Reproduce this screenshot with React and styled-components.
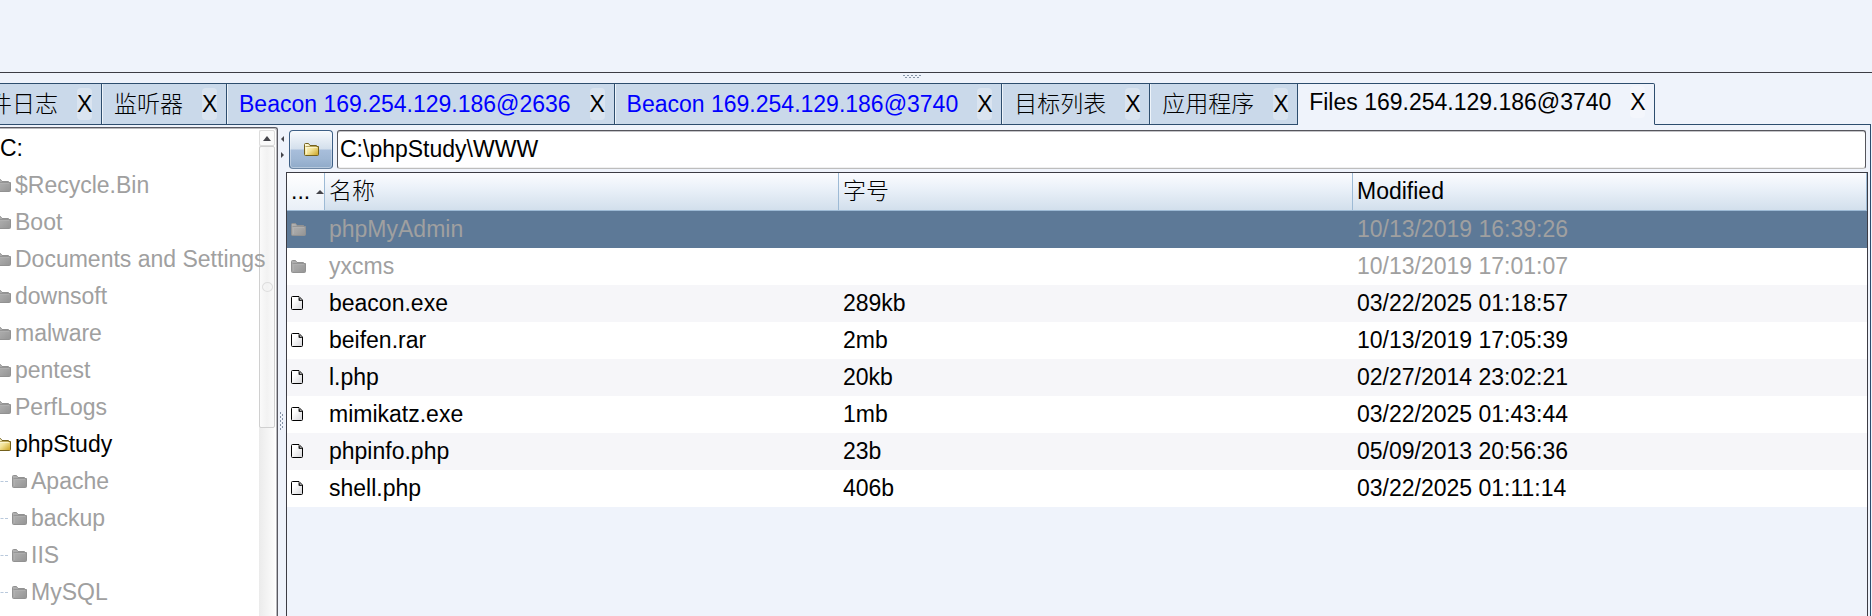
import React, { useState } from "react";
import styled, { createGlobalStyle, css } from "styled-components";

const color = {
  face: "#eff3fb",
  tab: "#cad9ea",
  edge: "#2d4d6e",
  frame: "#3c3c44",
  muted: "#a0a0a0",
  selection: "#5d7997",
  stripe: "#f6f6f9",
  headerLine: "#9dbad5",
};

const GlobalStyle = createGlobalStyle`
  * { box-sizing: border-box; }
  body { margin: 0; background: ${color.face}; }
  body, button, input, table {
    font-family: "Liberation Sans", "Noto Sans CJK SC", sans-serif;
    font-size: 23px;
    font-weight: 300;
    color: #000;
  }
`;

const Window = styled.div`
  display: flex;
  flex-direction: column;
  height: 100vh;
  overflow: hidden;
  background: ${color.face};
`;

const UpperPane = styled.section`
  flex: none;
  height: 73px;
  border-bottom: 1px solid ${color.frame};
`;

const HorizontalSplitter = styled.div`
  flex: none;
  display: flex;
  justify-content: center;
  height: 10px;
  padding: 2px 48px 0 0;
`;

const TabStrip = styled.div`
  flex: none;
  display: flex;
  height: 42px;
  margin-right: 1px;
  white-space: nowrap;

  &::after {
    content: "";
    flex: 1;
    border-bottom: 1px solid ${color.edge};
  }
`;

const Tab = styled.div`
  flex: none;
  display: flex;
  align-items: center;
  gap: 19px;
  padding: 0 9px 0 12px;
  border: solid ${color.edge};
  border-width: 1px 1px 1px 0;
  background: ${color.tab};
  box-shadow: inset 1px 0 #eef4fa;

  &:first-child { margin-left: -23px; }

  ${(p) => p.$active && css`
    padding: 0 9px 4px 11px;
    border-bottom-color: transparent;
    border-top-right-radius: 2px;
    background: ${color.face};
    box-shadow: none;
  `}
`;

const TabLabel = styled.button`
  padding: 0;
  border: 0;
  background: none;
  line-height: 32px;
  color: ${(p) => (p.$alert ? "#0000ff" : "#000")};
`;

const CloseButton = styled.button`
  width: 15px;
  padding: 0;
  border: 0;
  border-radius: 4px;
  background: rgba(255, 255, 255, 0.3);
  line-height: 32px;
`;

const Browser = styled.main`
  flex: 1;
  min-height: 0;
  display: flex;
  margin-right: 1px;
  padding: 2px 2px 0 0;
  border-right: 1px solid ${color.edge};
`;

const TreePane = styled.aside`
  flex: none;
  display: flex;
  width: 278px;
  border: solid #5a5a62;
  border-width: 1px 1px 0 0;
  border-top-right-radius: 3px;
  background: #fff;
  box-shadow: inset -1px 1px #b9b9bd;
  padding: 2px 2px 0 0;
  overflow: hidden;
`;

const Tree = styled.ul`
  flex: 1;
  min-width: 0;
  margin: 0;
  padding: 0;
  list-style: none;
  z-index: 1;
`;

const Branch = styled.ul`
  margin: 0 0 0 ${(p) => p.$indent}px;
  padding: 0;
  list-style: none;
`;

const Node = styled.div`
  display: flex;
  align-items: center;
  gap: 4px;
  height: 37px;
  line-height: 37px;
  white-space: nowrap;
  color: ${(p) => (p.$open ? "#000" : color.muted)};
`;

const Connector = styled.span`
  flex: none;
  width: 12px;
  border-top: 1px dashed #b9c9dc;
`;

const ScrollBar = styled.div`
  flex: none;
  width: 16px;
  display: flex;
  flex-direction: column;
  background: linear-gradient(90deg, #ebebeb, #fcfcfc);
`;

const ScrollButton = styled.button`
  display: grid;
  place-items: center;
  height: 16px;
  padding: 0;
  border: 1px solid #dcdcdc;
  border-radius: 2px;
  background: #fafafa;
`;

const Thumb = styled.div`
  display: grid;
  place-items: center;
  height: 282px;
  border: 1px solid #d0d0d0;
  border-radius: 2px;
  background: linear-gradient(90deg, #fafafa, #f2f2f2 50%, #fafafa);
`;

const Knob = styled.span`
  width: 11px;
  height: 10px;
  border: 1px solid #dedede;
  border-radius: 50%;
`;

const VerticalSplitter = styled.div`
  flex: none;
  width: 8px;
  display: flex;
  flex-direction: column;
  align-items: center;
  padding-top: 8px;
`;

const SplitButton = styled.button`
  display: grid;
  place-items: center;
  width: 8px;
  height: 8px;
  margin-bottom: 8px;
  padding: 0;
  border: 0;
  background: none;
`;

const VerticalGrip = styled.svg`
  margin-top: 245px;
`;

const FilePane = styled.section`
  flex: 1;
  min-width: 0;
  display: flex;
  flex-direction: column;
`;

const PathBar = styled.form`
  display: flex;
  gap: 4px;
  padding: 3px 2px 3px 3px;
`;

const UpButton = styled.button`
  flex: none;
  display: grid;
  place-items: center;
  width: 44px;
  height: 39px;
  padding: 0;
  border: 1px solid #3d5f86;
  border-bottom-color: #6d87a5;
  border-radius: 4px;
  background: linear-gradient(#f7fafd, #d3dfec 49%, #a8bedb 51%, #9fb7d4 75%, #8faac9);
  box-shadow: inset 0 0 0 1px rgba(255, 255, 255, 0.35);
`;

const PathInput = styled.input`
  flex: 1;
  min-width: 0;
  height: 39px;
  padding: 0 2px 1px;
  border: 1px solid #55555c;
  border-bottom-color: #bdbdbd;
  border-radius: 3px;
  background: #fff;
  box-shadow: inset 0 1px #c4c4c8, inset 0 -1px #f0f0f0;
  outline: 0;
`;

const TableFrame = styled.div`
  flex: 1;
  border: solid ${color.frame};
  border-width: 1px 1px 0 1px;
`;

const FileTable = styled.table`
  width: 100%;
  table-layout: fixed;
  border-collapse: separate;
  border-spacing: 0;
  line-height: 37px;
`;

const HeaderCell = styled.th`
  height: 38px;
  padding: 0 4px;
  border: solid ${color.headerLine};
  border-width: 0 1px 1px 0;
  background: linear-gradient(#fbfcff, #e9f0f8 45%, #d2dfec);
  font-weight: 300;
  text-align: left;
  white-space: nowrap;
`;

const IconHeaderCell = styled(HeaderCell)`
  width: 38px;
  padding: 0 0 0 4px;
  background: linear-gradient(#ffffff, #e9eff7);
`;

const SortLabel = styled.span`
  display: flex;
  align-items: center;
  justify-content: space-between;
`;

const FileRow = styled.tr`
  color: ${(p) => (p.$folder ? color.muted : "#000")};
  background: #fff;

  &:nth-child(odd) { background: ${color.stripe}; }

  ${(p) => p.$selected && css`
    &:nth-child(odd) { background: ${color.selection}; }
  `}
`;

const Cell = styled.td`
  height: 37px;
  padding: 0 4px;
  white-space: nowrap;

  svg { display: block; }
`;

const FolderSvg = styled.svg`
  flex: none;
`;

const Folder = ({ tone = "grey" }) => {
  const gold = tone === "gold";
  const id = `folder-${tone}`;
  return (
    <FolderSvg width="15" height="15" viewBox="0 0 15 15" aria-hidden="true">
      <defs>
        <linearGradient id={id} x1="0" y1="0" x2="1" y2="1">
          <stop offset="0" stopColor={gold ? "#fffde6" : "#b2b2b2"} />
          <stop offset="0.5" stopColor={gold ? "#f3e49a" : "#a6a6a6"} />
          <stop offset="1" stopColor={gold ? "#c9a01c" : "#949494"} />
        </linearGradient>
      </defs>
      <path
        d="M.5 12.500V2.500Q.5 1.500 1.500 1.500H4.500L6 3.500H12.500V4.500H14.500V12.500Q14.500 13.500 13.500 13.500H1.500Q.5 13.500 .5 12.500Z"
        fill={`url(#${id})`}
        stroke={gold ? "#73601c" : "#929292"}
      />
      <path d="M2.500 12V5.500H13" fill="none" stroke={gold ? "#fffbe0" : "#b4b4b4"} opacity=".6" />
      <path d="M1.500 4.500H12.500" stroke={gold ? "#a08a3a" : "#8e8e8e"} opacity=".7" />
    </FolderSvg>
  );
};

const Page = () => (
  <svg width="13" height="15" viewBox="0 0 13 15" aria-hidden="true">
    <defs>
      <linearGradient id="page" x1="0" y1="0" x2="1" y2="1">
        <stop offset="0.3" stopColor="#fff" />
        <stop offset="1" stopColor="#d4d4d8" />
      </linearGradient>
    </defs>
    <path d="M1.500 .5H8L11.500 4V12.500Q11.500 13.500 10.500 13.500H1.500Q.5 13.500 .5 12.500V1.500Q.5 .5 1.500 .5Z" fill="url(#page)" stroke="#000" />
    <path d="M7.500 1L11.500 5H8.500Q7.500 5 7.500 4Z" fill="#222" />
    <path d="M9 3L10 4" stroke="#aaa" />
  </svg>
);

const Triangle = ({ points, w, h }) => (
  <svg width={w} height={h} aria-hidden="true">
    <polygon points={points} fill="#44444a" />
  </svg>
);

const tabs = [
  { label: "件日志" },
  { label: "监听器" },
  { label: "Beacon 169.254.129.186@2636", alert: true },
  { label: "Beacon 169.254.129.186@3740", alert: true },
  { label: "目标列表" },
  { label: "应用程序" },
  { label: "Files 169.254.129.186@3740" },
];

const folders = [
  { name: "$Recycle.Bin" },
  { name: "Boot" },
  { name: "Documents and Settings" },
  { name: "downsoft" },
  { name: "malware" },
  { name: "pentest" },
  { name: "PerfLogs" },
  { name: "phpStudy", children: ["Apache", "backup", "IIS", "MySQL"] },
];

const files = [
  { name: "phpMyAdmin", size: "", modified: "10/13/2019 16:39:26", folder: true },
  { name: "yxcms", size: "", modified: "10/13/2019 17:01:07", folder: true },
  { name: "beacon.exe", size: "289kb", modified: "03/22/2025 01:18:57" },
  { name: "beifen.rar", size: "2mb", modified: "10/13/2019 17:05:39" },
  { name: "l.php", size: "20kb", modified: "02/27/2014 23:02:21" },
  { name: "mimikatz.exe", size: "1mb", modified: "03/22/2025 01:43:44" },
  { name: "phpinfo.php", size: "23b", modified: "05/09/2013 20:56:36" },
  { name: "shell.php", size: "406b", modified: "03/22/2025 01:11:14" },
];

export default function App() {
  const [path, setPath] = useState("C:\\phpStudy\\WWW");

  return (
    <Window>
      <GlobalStyle />
      <UpperPane />
      <HorizontalSplitter>
        <svg width="18" height="4" aria-hidden="true">
          <path d="M0 .5H18" stroke="#8593a6" strokeDasharray="2 2" />
          <path d="M2 2.500H18" stroke="#8593a6" strokeDasharray="2 2" />
        </svg>
      </HorizontalSplitter>

      <TabStrip role="tablist">
        {tabs.map((tab, i) => {
          const active = i === tabs.length - 1;
          return (
            <Tab key={tab.label} $active={active}>
              <TabLabel type="button" role="tab" aria-selected={active} $alert={tab.alert}>
                {tab.label}
              </TabLabel>
              <CloseButton type="button">X</CloseButton>
            </Tab>
          );
        })}
      </TabStrip>

      <Browser>
        <TreePane>
          <Tree>
            <li>
              <Node $open>C:</Node>
              <Branch $indent={-4}>
                {folders.map(({ name, children }) => (
                  <li key={name}>
                    <Node $open={!!children}>
                      <Folder tone={children ? "gold" : "grey"} />
                      {name}
                    </Node>
                    {children && (
                      <Branch $indent={0}>
                        {children.map((child) => (
                          <li key={child}>
                            <Node>
                              <Connector />
                              <Folder />
                              {child}
                            </Node>
                          </li>
                        ))}
                      </Branch>
                    )}
                  </li>
                ))}
              </Branch>
            </li>
          </Tree>
          <ScrollBar>
            <ScrollButton type="button" aria-label="Scroll up">
              <Triangle points="0,5 4,0 8,5" w="8" h="5" />
            </ScrollButton>
            <Thumb>
              <Knob />
            </Thumb>
          </ScrollBar>
        </TreePane>

        <VerticalSplitter>
          <SplitButton type="button" aria-label="Collapse left">
            <Triangle points="3,0 0,3 3,6" w="3" h="6" />
          </SplitButton>
          <SplitButton type="button" aria-label="Collapse right">
            <Triangle points="0,0 3,3 0,6" w="3" h="6" />
          </SplitButton>
          <VerticalGrip width="4" height="18" aria-hidden="true">
            <path d="M.5 0V18" stroke="#8593a6" strokeDasharray="2 2" />
            <path d="M2.500 2V18" stroke="#8593a6" strokeDasharray="2 2" />
          </VerticalGrip>
        </VerticalSplitter>

        <FilePane>
          <PathBar onSubmit={(e) => e.preventDefault()}>
            <UpButton type="button" aria-label="Parent folder">
              <Folder tone="gold" />
            </UpButton>
            <PathInput aria-label="Path" value={path} onChange={(e) => setPath(e.target.value)} />
          </PathBar>
          <TableFrame>
            <FileTable>
              <thead>
                <tr>
                  <IconHeaderCell>
                    <SortLabel>
                      ...
                      <Triangle points="0,4 4,0 8,4" w="8" h="4" />
                    </SortLabel>
                  </IconHeaderCell>
                  <HeaderCell>名称</HeaderCell>
                  <HeaderCell>字号</HeaderCell>
                  <HeaderCell>Modified</HeaderCell>
                </tr>
              </thead>
              <tbody>
                {files.map((file, i) => (
                  <FileRow key={file.name} $folder={file.folder} $selected={i === 0}>
                    <Cell>{file.folder ? <Folder /> : <Page />}</Cell>
                    <Cell>{file.name}</Cell>
                    <Cell>{file.size}</Cell>
                    <Cell>{file.modified}</Cell>
                  </FileRow>
                ))}
              </tbody>
            </FileTable>
          </TableFrame>
        </FilePane>
      </Browser>
    </Window>
  );
}
